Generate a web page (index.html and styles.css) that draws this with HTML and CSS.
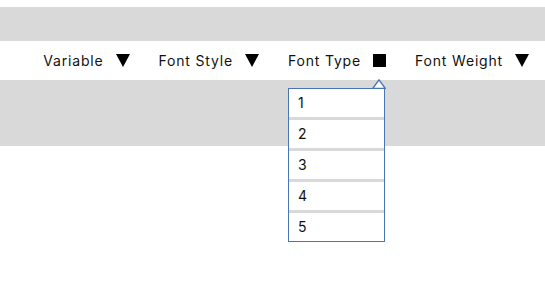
FILE: index.html
```html
<!DOCTYPE html>
<html lang="en">
<head>
  <meta charset="UTF-8" />
  <title>Font Filters</title>
  <link rel="stylesheet" href="styles.css">
</head>
<body>
  <div class="band band-top"></div>

  <nav class="filters">
    <div class="filter">
      <span>Variable</span>
      <svg class="icon" width="14" height="13" viewBox="0 0 14 13"><polygon points="0,0 14,0 7,13" fill="#000"/></svg>
    </div>
    <div class="filter">
      <span>Font Style</span>
      <svg class="icon" width="14" height="13" viewBox="0 0 14 13"><polygon points="0,0 14,0 7,13" fill="#000"/></svg>
    </div>
    <div class="filter open">
      <span>Font Type</span>
      <svg class="icon" width="13" height="13" viewBox="0 0 13 13"><rect width="13" height="13" fill="#000"/></svg>

      <div class="dropdown">
        <svg class="pointer" width="14" height="10" viewBox="0 0 14 10"><polygon points="7,0.9 13.2,9.4 0.8,9.4" fill="#fff" stroke="#4a75b5" stroke-width="1.4"/></svg>
        <ul>
          <li>1</li>
          <li>2</li>
          <li>3</li>
          <li>4</li>
          <li>5</li>
        </ul>
      </div>
    </div>
    <div class="filter">
      <span>Font Weight</span>
      <svg class="icon" width="14" height="13" viewBox="0 0 14 13"><polygon points="0,0 14,0 7,13" fill="#000"/></svg>
    </div>
  </nav>

  <div class="band band-bottom"></div>
</body>
</html>
```

FILE: styles.css
```css
* {
  margin: 0;
  padding: 0;
  box-sizing: border-box;
}

html, body {
  min-height: 100%;
  height: 100%;
}

body {
  font-family: 'Inter', 'Roboto', sans-serif;
  font-size: 14px;
  color: #111;
  background: #fff;
}

.band {
  background-color: #d9d9d9;
}

.band-top {
  margin-top: 7px;
  height: 34px;
}

.band-bottom {
  height: 66px;
}

.filters {
  height: 39px;
  display: flex;
  justify-content: flex-end;
  align-items: center;
  gap: 29px;
  padding-right: 16px;
}

.filter {
  position: relative;
  display: flex;
  align-items: center;
  gap: 12px;
  letter-spacing: 0.82px;
}

.filter .icon {
  display: block;
}

.dropdown {
  position: absolute;
  top: 36px;
  left: 0;
  right: 1px;
  z-index: 2;
}

.dropdown .pointer {
  position: absolute;
  top: -9px;
  right: -1px;
  display: block;
}

.dropdown ul {
  list-style: none;
  background-color: #d9d9d9;
  border: 1px solid #4a75b5;
  display: flex;
  flex-direction: column;
  gap: 3px;
}

.dropdown li {
  height: 28px;
  line-height: 28px;
  padding-left: 9px;
  background-color: #fff;
  font-size: 14px;
  letter-spacing: 0;
}
```
